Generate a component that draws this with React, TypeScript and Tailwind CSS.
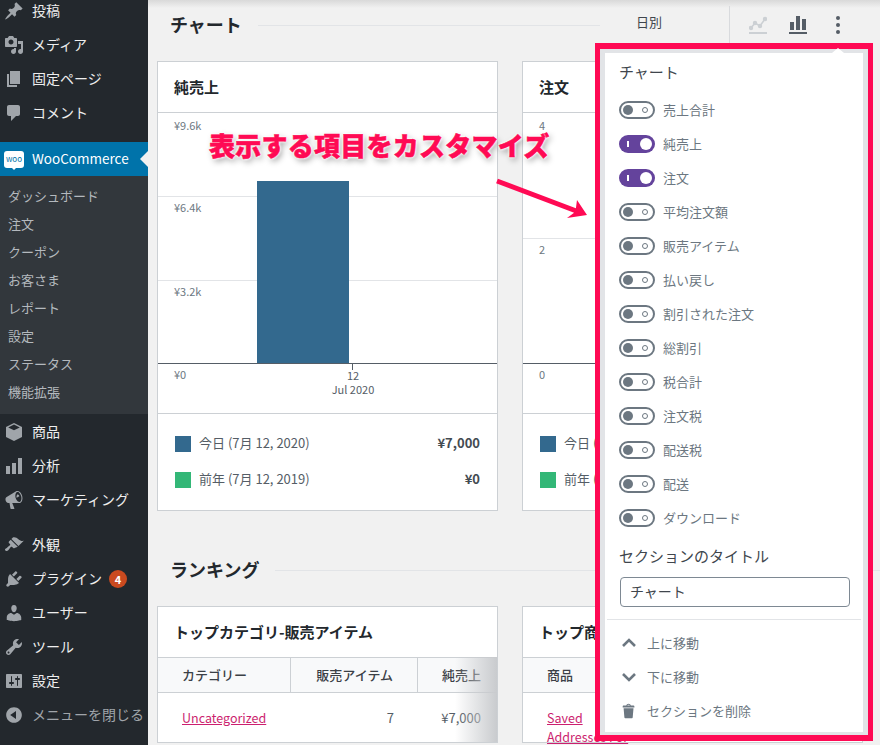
import React from 'react';

const font = "font-['Noto_Sans_CJK_JP','Noto_Sans',sans-serif]";

// dashicons style paths for the admin menu
const icons = {
  post: 'M10.44 3.02l1.82-1.82 6.36 6.35-1.83 1.82c-1.05-.68-2.48-.57-3.41.36l-.75.75c-.92.93-1.04 2.35-.35 3.41l-1.83 1.82-2.41-2.41-2.8 2.79c-.42.42-3.38 2.71-3.8 2.29s1.86-3.39 2.28-3.81l2.79-2.79L4.1 9.36l1.83-1.82c1.05.69 2.48.57 3.4-.36l.75-.75c.93-.92 1.05-2.35.36-3.41z',
  media: 'M13 11V4c0-.55-.45-1-1-1h-1.67L9 1H5L3.67 3H2c-.55 0-1 .45-1 1v7c0 .55.45 1 1 1h10c.55 0 1-.45 1-1zM7 4.5c1.38 0 2.5 1.12 2.5 2.5S8.38 9.5 7 9.5 4.5 8.38 4.5 7 5.62 4.5 7 4.5zM14 6h5v10.5c0 1.38-1.12 2.5-2.5 2.5S14 17.88 14 16.5s1.12-2.5 2.5-2.5c.17 0 .34.02.5.05V9h-3V6zm-4 8.05V13h2v3.5c0 1.38-1.12 2.5-2.5 2.5S7 17.88 7 16.5 8.12 14 9.5 14c.17 0 .34.02.5.05z',
  page: 'M6 15V2h10v13H6zm-1 1h8v2H3V5h2v11z',
  comment: 'M5 2h9c1.1 0 2 .9 2 2v7c0 1.1-.9 2-2 2h-2l-5 5v-5H5c-1.1 0-2-.9-2-2V4c0-1.1.9-2 2-2z',
  box: 'M10 1l8 4v10l-8 4-8-4V5zM10 2.6L4.2 5.4 10 8.2l5.8-2.8zM7.6 3.9l5.7 2.9',
  chart: 'M18 18V2h-4v16h4zm-6 0V7H8v11h4zm-6 0v-8H2v8h4z',
  megaphone: 'M18.15 5.94c.46 1.62.38 3.22-.02 4.48-.42 1.28-1.26 2.18-2.3 2.48-.16.06-.26.06-.4.06-.06.02-.12.02-.18.02-.06.02-.14.02-.22.02H8.23l2.22 5.5c.02.14-.06.26-.14.34-.08.1-.24.16-.34.16H6.95c-.1 0-.26-.06-.34-.16-.08-.08-.16-.2-.14-.34l-1-5.5H4.25l-.02-.02c-.5.06-1.08-.18-1.54-.62s-.88-1.08-1.06-1.88c-.24-.8-.2-1.56-.02-2.2.18-.62.58-1.08 1.06-1.3l.02-.02 9-5.4c.1-.06.18-.1.24-.16.06-.04.14-.08.24-.12.16-.08.28-.12.5-.18 1.04-.3 2.24.1 3.22 1 .98.88 1.84 2.24 2.26 3.86zm-2.58 5.98h-.02c.4-.1.74-.34 1.04-.7.58-.7.86-1.76.86-3.04-.02-.64-.1-1.3-.28-1.98-.34-1.36-1.02-2.5-1.78-3.24-.38-.38-.8-.68-1.22-.84-.4-.16-.78-.2-1.12-.1-.32.1-.62.32-.92.68-.5.7-.82 1.78-.82 3.04 0 .64.1 1.3.26 1.98.34 1.34 1.02 2.5 1.8 3.24.38.38.8.68 1.2.84.36.16.72.2 1 .12zm-2.4-7.44c.38-.1.8.02 1.22.32.42.32.78.82 1 1.44l-2.76 1.52c-.28-.98-.12-1.96.54-3.28z',
  brush: 'M14.48 11.06L7.41 3.99l1.5-1.5c.5-.56 2.3-.47 3.51.32 1.21.8 1.43 1.28 2.91 2.1 1.18.64 2.45 1.26 4.45.85zm-.71.71L6.7 4.7 4.93 6.47c-.39.39-.39 1.02 0 1.41l1.06 1.06c.39.39.39 1.03 0 1.42-.6.6-1.43 1.11-2.21 1.69-.35.26-.7.53-1.01.84C1.43 13.23.4 14.4 1.41 15.41c.98.98 2.36.26 2.83-.21.31-.31.59-.66.85-1.01.59-.8 1.11-1.62 1.69-2.21.39-.39 1.02-.39 1.41 0l1.06 1.06c.39.39 1.02.39 1.41 0z',
  plug: 'M13.11 4.36L9.87 7.6 8 5.73l3.24-3.24c.35-.34 1.05-.2 1.56.32.52.51.66 1.21.31 1.55zm-8 1.77l.91-1.12 9.01 9.01-1.19.84c-.71.71-2.63 1.16-3.82 1.16H6.14L4.9 17.26c-.59.59-1.54.59-2.12 0-.59-.58-.59-1.53 0-2.12l1.24-1.24v-3.88c0-1.13.4-3.19 1.09-3.89zm7.26 3.97l3.24-3.24c.34-.35 1.04-.21 1.55.31.52.51.66 1.21.31 1.55l-3.24 3.25z',
  user: 'M10 9.25c-2.27 0-2.73-3.44-2.73-3.44C7 4.02 7.82 2 9.97 2c2.16 0 2.98 2.02 2.71 3.81 0 0-.41 3.44-2.68 3.44zm0 2.57L12.72 10c2.39 0 4.52 2.33 4.52 4.53v2.49s-3.65 1.13-7.24 1.13c-3.65 0-7.24-1.13-7.24-1.13v-2.49c0-2.25 1.94-4.53 4.47-4.53z',
  wrench: 'M16.68 9.77c-1.34 1.34-3.3 1.67-4.95.99l-5.41 6.52c-.99.99-2.59.99-3.58 0s-.99-2.59 0-3.57l6.52-5.42c-.68-1.65-.35-3.61.99-4.95 1.28-1.28 3.12-1.62 4.72-1.06l-2.89 2.89 2.82 2.82 2.86-2.87c.53 1.58.18 3.39-1.08 4.65zM3.81 16.21c.4.39 1.04.39 1.43 0 .4-.4.4-1.04 0-1.43-.39-.4-1.03-.4-1.43 0-.39.39-.39 1.03 0 1.43z',
  settings: 'M18 16V4c0-.55-.45-1-1-1H3c-.55 0-1 .45-1 1v12c0 .55.45 1 1 1h14c.55 0 1-.45 1-1zM8 11h1c.55 0 1 .45 1 1s-.45 1-1 1H8v1.5c0 .28-.22.5-.5.5s-.5-.22-.5-.5V13H6c-.55 0-1-.45-1-1s.45-1 1-1h1V5.5c0-.28.22-.5.5-.5s.5.22.5.5V11zm5-2h-1c-.55 0-1-.45-1-1s.45-1 1-1h1V5.5c0-.28.22-.5.5-.5s.5.22.5.5V7h1c.55 0 1 .45 1 1s-.45 1-1 1h-1v5.5c0 .28-.22.5-.5.5s-.5-.22-.5-.5V9z',
  collapse: 'M10 2.16c4.33 0 7.84 3.51 7.84 7.84s-3.51 7.84-7.84 7.84S2.16 14.33 2.16 10 5.71 2.16 10 2.16zm2 11.72V6.12L6.18 9.97z',
  trash: 'M12 4h3c.6 0 1 .4 1 1v1H3V5c0-.6.5-1 1-1h3c.2-1.1 1.3-2 2.5-2s2.3.9 2.5 2zM8 4h3c-.2-.6-.9-1-1.5-1S8.2 3.4 8 4zM4 7h11l-.9 10.1c0 .5-.5.9-1 .9H5.9c-.5 0-.9-.4-1-.9L4 7z',
};

function Dash({ d, size = 20 }: { d: string; size?: number }) {
  return (
    <svg width={size} height={size} viewBox="0 0 20 20" fill="currentColor" fillRule="evenodd">
      <path d={d} />
    </svg>
  );
}

function MenuItem({ icon, label, badge, dim }: { icon: string; label: string; badge?: string; dim?: boolean }) {
  return (
    <div className={`flex h-[34px] items-center ${dim ? 'text-[#a0a5aa]' : 'text-[#eeeeee]'}`}>
      <span className="flex w-[32px] pl-[4px] text-[#a0a5aa]"><Dash d={icon} /></span>
      <span className="pb-[2px] text-[14px]">{label}</span>
      {badge && (
        <span className="ml-[7px] flex h-[18px] w-[18px] items-center justify-center rounded-full bg-[#ca4a1f] text-[11px] font-bold text-white">
          {badge}
        </span>
      )}
    </div>
  );
}

function Sidebar() {
  const sub = ['ダッシュボード', '注文', 'クーポン', 'お客さま', 'レポート', '設定', 'ステータス', '機能拡張'];
  return (
    <aside className="-mt-[6px] flex h-[751px] w-[148px] shrink-0 flex-col bg-[#23282d]">
      <MenuItem icon={icons.post} label="投稿" />
      <MenuItem icon={icons.media} label="メディア" />
      <MenuItem icon={icons.page} label="固定ページ" />
      <MenuItem icon={icons.comment} label="コメント" />
      <div className="h-[12px]" />
      <div className="relative flex h-[34px] items-center bg-[#0073aa] text-white">
        <span className="flex w-[32px] pl-[4px]">
          <span className="relative flex h-[17px] w-[20px] items-center justify-center rounded-[3px] bg-white text-[8px] leading-none text-[#0073aa]">
            woo
            <span className="absolute -bottom-[2px] left-[8px] h-0 w-0 border-x-[2px] border-t-[2px] border-x-transparent border-t-white" />
          </span>
        </span>
        <span className="pb-[2px] text-[13.5px]">WooCommerce</span>
        <span className="absolute right-0 top-[9px] h-0 w-0 border-y-[8px] border-r-[8px] border-y-transparent border-r-[#f1f1f1]" />
      </div>
      <div className="flex flex-col bg-[#32373c] py-[7px]">
        {sub.map((s) => (
          <div key={s} className="flex h-[28px] items-center pb-[2px] pl-[8px] text-[13px] text-[#b4b9be]">{s}</div>
        ))}
      </div>
      <div className="h-[1px]" />
      <MenuItem icon={icons.box} label="商品" />
      <MenuItem icon={icons.chart} label="分析" />
      <MenuItem icon={icons.megaphone} label="マーケティング" />
      <div className="h-[11px]" />
      <MenuItem icon={icons.brush} label="外観" />
      <MenuItem icon={icons.plug} label="プラグイン" badge="4" />
      <MenuItem icon={icons.user} label="ユーザー" />
      <MenuItem icon={icons.wrench} label="ツール" />
      <MenuItem icon={icons.settings} label="設定" />
      <MenuItem icon={icons.collapse} label="メニューを閉じる" dim />
    </aside>
  );
}

function Legend({ date1, date2, v1, v2 }: { date1: string; date2: string; v1: string; v2: string }) {
  return (
    <div className="flex h-[97px] flex-col justify-center gap-[20px] border-t border-[#ccd0d4] px-[17px] text-[13px] text-[#555d66]">
      <div className="flex h-[16px] items-center">
        <span className="mr-[8px] h-[16px] w-[16px] shrink-0 bg-[#33698e]" />
        <span className="flex-1 whitespace-nowrap pb-[2px]">{date1}</span>
        <b className="pb-[2px] text-[#444b52]">{v1}</b>
      </div>
      <div className="flex h-[16px] items-center">
        <span className="mr-[8px] h-[16px] w-[16px] shrink-0 bg-[#33b777]" />
        <span className="flex-1 whitespace-nowrap pb-[2px]">{date2}</span>
        <b className="pb-[2px] text-[#444b52]">{v2}</b>
      </div>
    </div>
  );
}

type Row = { tick: string; cls: string };

function ChartCard({ title, rows, bottom, bar, v1, v2 }: { title: string; rows: Row[]; bottom: string; bar?: boolean; v1: string; v2: string }) {
  return (
    <div className="h-[450px] w-[341px] shrink-0 border border-[#ccd0d4] bg-white">
      <div className="flex h-[50px] items-center pl-[16px] text-[15px] font-bold text-[#23282d]">{title}</div>
      <div className="relative h-[301px] border-t border-[#ccd0d4] text-[11px] leading-[14px] text-[#6c7781]">
        {rows.map((r, i) => (
          <div key={r.tick} className={`border-b pl-[16px] ${r.cls} ${i === 0 ? 'pt-[5px]' : 'pt-[3px]'} ${i === rows.length - 1 ? 'border-[#555d66]' : 'border-[#e2e4e7]'}`}>
            {r.tick}
          </div>
        ))}
        <div className="pl-[16px] pt-[3px]">{bottom}</div>
        {bar && (
          <>
            <div className="absolute bottom-[50px] left-[99px] h-[182px] w-[92px] bg-[#33698e]" />
            <div className="absolute bottom-[43px] left-[194px] h-[7px] w-[1px] bg-[#555d66]" />
            <div className="absolute bottom-[17px] left-[150px] w-[90px] text-center text-[#555d66]">12<br />Jul 2020</div>
          </>
        )}
      </div>
      <Legend date1="今日 (7月 12, 2020)" date2="前年 (7月 12, 2019)" v1={v1} v2={v2} />
    </div>
  );
}

function SectionTitle({ title, children }: { title: string; children?: React.ReactNode }) {
  return (
    <div className="flex h-[46px] items-center pl-[13px]">
      <h2 className="whitespace-nowrap pb-[2px] text-[18px] font-bold text-[#23282d]">{title}</h2>
      <div className="ml-[16px] h-[1px] flex-1 bg-[#e2e4e7]" />
      {children}
    </div>
  );
}

function TableCard({ title, cols, cellA, cellB, cellC, fade }: { title: string; cols: string[]; cellA: React.ReactNode; cellB: string; cellC: string; fade?: boolean }) {
  return (
    <div className="relative w-[341px] shrink-0 border border-[#ccd0d4] bg-white">
      <div className="flex h-[50px] items-center pl-[16px] text-[15px] font-bold text-[#23282d]">{title}</div>
      <div className="flex h-[36px] border-y border-[#ccd0d4] bg-[#f8f9fa] text-[13px] font-medium text-[#3b4046]">
        <div className="flex w-[133px] items-center border-r border-[#ccd0d4] pl-[24px]">{cols[0]}</div>
        <div className="flex w-[127px] items-center justify-end border-r border-[#ccd0d4] pr-[24px]">{cols[1]}</div>
        <div className="flex flex-1 items-center justify-end pr-[16px]">{cols[2]}</div>
      </div>
      <div className="flex h-[49px] pt-[15px] text-[13px] leading-[19px] text-[#555d66]">
        <div className="w-[133px] whitespace-nowrap pl-[24px] text-[12.5px] text-[#cc1f6f] underline">{cellA}</div>
        <div className="w-[127px] pr-[24px] text-right">{cellB}</div>
        <div className="flex-1 pr-[16px] text-right">{cellC}</div>
      </div>
      {fade && <div className="absolute bottom-0 right-0 top-[50px] w-[42px] bg-gradient-to-r from-transparent to-[#c9cbce]" />}
    </div>
  );
}

function Toggle({ on, label }: { on?: boolean; label: string }) {
  return (
    <div className="flex h-[34px] items-center text-[13px] text-[#6c7781]">
      {on ? (
        <span className="flex h-[18px] w-[36px] items-center justify-between rounded-full bg-[#64439c] pl-[8px] pr-[3px]">
          <span className="h-[6px] w-[2px] bg-white" />
          <span className="h-[12px] w-[12px] rounded-full bg-white" />
        </span>
      ) : (
        <span className="flex h-[18px] w-[36px] items-center justify-between rounded-full border-2 border-[#6c7781] pl-[2px] pr-[5px]">
          <span className="h-[10px] w-[10px] rounded-full bg-[#6c7781]" />
          <span className="h-[6px] w-[6px] rounded-full border border-[#6c7781]" />
        </span>
      )}
      <span className="ml-[8px]">{label}</span>
    </div>
  );
}

function Chevron({ up }: { up?: boolean }) {
  return (
    <svg width="18" height="18" viewBox="0 0 18 18" fill="none" stroke="currentColor" strokeWidth="2.6">
      <path d={up ? 'M3 12l6-6 6 6' : 'M3 6l6 6 6-6'} />
    </svg>
  );
}

function Popover() {
  const rows: [string, boolean?][] = [
    ['売上合計'], ['純売上', true], ['注文', true], ['平均注文額'], ['販売アイテム'], ['払い戻し'], ['割引された注文'],
    ['総割引'], ['税合計'], ['注文税'], ['配送税'], ['配送'], ['ダウンロード'],
  ];
  return (
    <div className="absolute left-[595px] top-[43px] h-[698px] w-[278px] border-x-[5px] border-y-[6px] border-[#ff0a54]">
      <div className="relative h-full bg-[#e2e4e7] px-[5px] pb-[3px] pt-[4px]">
        <span className="absolute left-[232px] top-[-1px] h-0 w-0 border-x-[6px] border-b-[5px] border-x-transparent border-b-white" />
        <div className="flex h-full flex-col bg-white">
          <div className="pl-[14px] pt-[7px] text-[15px] leading-[24px] text-[#40464d]">チャート</div>
          <div className="mt-[9px] flex flex-col pl-[14px]">
            {rows.map(([l, on]) => <Toggle key={l} label={l} on={on} />)}
          </div>
          <div className="mt-[9px] pl-[14px] text-[15px] leading-[24px] text-[#40464d]">セクションのタイトル</div>
          <div className="ml-[15px] mt-[9px] flex h-[30px] w-[230px] items-center rounded-[4px] border border-[#7e8993] pb-[2px] pl-[9px] text-[14px] text-[#40464d]">チャート</div>
          <div className="ml-[2px] mt-[12px] h-[1px] w-[254px] bg-[#e2e4e7]" />
          <div className="flex flex-col pl-[15px] pt-[6px] text-[13px] text-[#6c7781]">
            <div className="flex h-[34px] items-center gap-[9px]"><Chevron up /><span>上に移動</span></div>
            <div className="flex h-[34px] items-center gap-[9px]"><Chevron /><span>下に移動</span></div>
            <div className="flex h-[34px] items-center gap-[9px]"><Dash d={icons.trash} size={18} /><span>セクションを削除</span></div>
          </div>
        </div>
      </div>
    </div>
  );
}

export default function App() {
  return (
    <div className={`relative flex h-[745px] w-[880px] overflow-hidden bg-[#f1f1f1] ${font}`}>
      <Sidebar />
      <main className="flex-1 overflow-hidden">
        <div className="pl-[9px] pt-[2px]">
          <SectionTitle title="チャート">
            <span className="ml-[36px] w-[93px] pb-[6px] text-[13px] text-[#40464d]">日別</span>
            <div className="flex h-[38px] items-center border-l border-[#d8dadd]">
              <svg width="18" height="18" viewBox="0 0 18 18" className="ml-[19px] text-[#ccd0d4]" fill="none" stroke="currentColor" strokeWidth="1.6">
                <path d="M2 12l4-5 5 3 5-7" />
                <circle cx="2" cy="12" r="1.4" fill="currentColor" />
                <circle cx="6" cy="7" r="1.4" fill="currentColor" />
                <circle cx="11" cy="10" r="1.4" fill="currentColor" />
                <circle cx="16" cy="3" r="1.4" fill="currentColor" />
                <path d="M0 17h18" strokeWidth="2" />
              </svg>
              <svg width="18" height="18" viewBox="0 0 18 18" className="ml-[22px] text-[#555d66]" fill="currentColor">
                <path d="M1 6h4v8H1zM7 0h4v14H7zM13 3h4v11h-4zM0 16h18v2H0z" />
              </svg>
              <svg width="4" height="18" viewBox="0 0 4 18" className="ml-[29px] mr-[40px] text-[#555d66]" fill="currentColor">
                <circle cx="2" cy="2" r="2" /><circle cx="2" cy="9" r="2" /><circle cx="2" cy="16" r="2" />
              </svg>
            </div>
          </SectionTitle>
        </div>
        <div className="ml-[9px] mt-[13px] flex gap-[24px]">
          <ChartCard
            title="純売上"
            bar
            rows={[
              { tick: '¥9.6k', cls: 'h-[84px]' },
              { tick: '¥6.4k', cls: 'h-[84px]' },
              { tick: '¥3.2k', cls: 'h-[83px]' },
            ]}
            bottom="¥0"
            v1="¥7,000"
            v2="¥0"
          />
          <ChartCard
            title="注文"
            rows={[
              { tick: '4', cls: 'h-[126px]' },
              { tick: '2', cls: 'h-[125px]' },
            ]}
            bottom="0"
            v1="4"
            v2="0"
          />
        </div>
        <div className="ml-[9px] mt-[36px]">
          <SectionTitle title="ランキング" />
        </div>
        <div className="ml-[9px] mt-[13px] flex gap-[24px]">
          <TableCard fade title="トップカテゴリ-販売アイテム" cols={['カテゴリー', '販売アイテム', '純売上']} cellA="Uncategorized" cellB="7" cellC="¥7,000" />
          <TableCard title="トップ商品-販売アイテム" cols={['商品', '販売アイテム', '純売上']} cellA={<>Saved<br />Addresses For</>} cellB="3" cellC="¥1,000" />
        </div>
      </main>
      <div className="absolute left-[148px] right-0 top-0 h-[8px] bg-gradient-to-b from-[#d9d9d9] to-transparent" />
      <Popover />
      <div className="absolute left-[209px] top-[127px] whitespace-nowrap text-[26px] font-black leading-[36px] tracking-[0.25px] text-[#ff0a54] [-webkit-text-stroke:0.5px_#ff0a54] [text-shadow:0_0_3px_#fff,0_0_3px_#fff,0_0_3px_#fff,2px_3px_6px_#0006]">
        表示する項目をカスタマイズ
      </div>
      <svg className="absolute left-[490px] top-[170px]" width="100" height="60" viewBox="0 0 100 60" fill="#ff0a54">
        <path d="M7.9 8.7L85.9 38.2 87 30l10 15-20 3 7.1-5.2L6.1 13.3z" />
      </svg>
    </div>
  );
}
